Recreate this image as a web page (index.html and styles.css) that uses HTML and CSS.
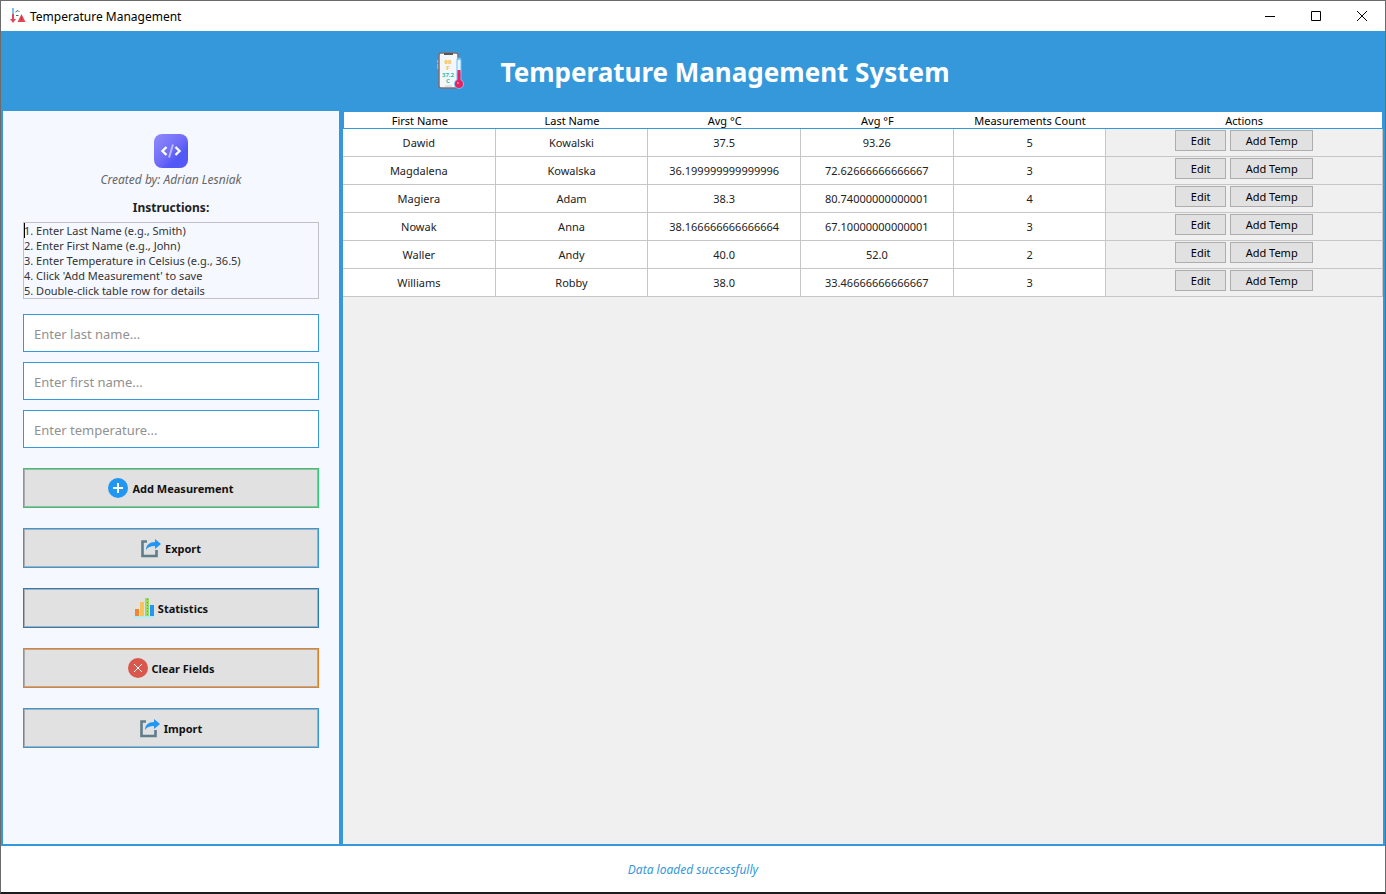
FILE: index.html
```html
<!DOCTYPE html>
<html lang="en">
<head>
<meta charset="utf-8">
<title>Temperature Management</title>
<link rel="stylesheet" href="styles.css">
</head>
<body>
<svg class="defs" aria-hidden="true">
  <symbol id="share" viewBox="0 0 20 20">
    <path d="M6 3.500H1.500V18h14v-6" fill="none" stroke="#607d8b" stroke-width="2.600"/>
    <path d="M14 1l6 5-6 5V8C9.500 8 7 9 5 12 5 7 8.500 4 14 4z" fill="#2196f3"/>
  </symbol>
</svg>
<div class="window">
  <div class="titlebar">
    <svg class="app-icon" viewBox="0 0 16 16" aria-hidden="true">
      <path d="M3 0v9" stroke="#7cc8ea" stroke-width="2"/>
      <path d="M3 6v6" stroke="#e04858" stroke-width="2"/>
      <path d="M0 11h6l-3 4z" fill="#e04858"/>
      <path d="M5.500 4L8 2.500 9.500 4M6 7.500h2.500" stroke="#45717c" fill="none"/>
      <path d="M11.500 6l4 8h-8z" fill="#e04858"/>
      <path d="M11.500 9v3" stroke="#a93646"/>
    </svg>
    <span class="caption">Temperature Management</span>
    <button class="win-btn" aria-label="Minimize"><svg viewBox="0 0 10 10"><path d="M0 5.500h10"/></svg></button>
    <button class="win-btn" aria-label="Maximize"><svg viewBox="0 0 10 10"><path d="M.5.500h9v9h-9z"/></svg></button>
    <button class="win-btn" aria-label="Close"><svg viewBox="0 0 10 10"><path d="M0 0l10 10M10 0L0 10"/></svg></button>
  </div>
  <header class="header">
    <svg class="logo" viewBox="0 0 28 38" aria-hidden="true">
      <path d="M0 8h2v3H0zM0 12h2v5H0z" fill="#b9a7a5"/>
      <rect x="2" y="1" width="19" height="35" rx="2" fill="#f3f7f9" stroke="#806f72" stroke-width="1.500"/>
      <path d="M7 1h9v2H7z" fill="#5b5558"/>
      <g class="logo-text">
        <text x="11" y="12" fill="#fbb545">99</text>
        <text x="11" y="18" fill="#fbb545">F</text>
        <text x="11" y="25" fill="#2cc0ae">37.2</text>
        <text x="11" y="31" fill="#2cc0ae">C</text>
      </g>
      <path d="M8 34h7" stroke="#c9cdd0"/>
      <path d="M22 8v23" stroke="#6cc0f3" stroke-width="5" stroke-linecap="round"/>
      <circle cx="22" cy="32" r="5" fill="#6cc0f3"/>
      <path d="M22 9v11" stroke="#e8f6fd" stroke-width="3" stroke-linecap="round"/>
      <path d="M22 18v13" stroke="#e92262" stroke-width="3"/>
      <circle cx="22" cy="32" r="4" fill="#e92262"/>
      <circle cx="21" cy="31" r="1" fill="#ff7fa8"/>
    </svg>
    <h1>Temperature Management System</h1>
  </header>
  <main class="main">
    <aside class="sidebar">
      <svg class="code-icon" viewBox="0 0 34 34" aria-hidden="true">
        <defs><linearGradient id="violet" x1="0" y1="0" x2="1" y2="1"><stop offset="0" stop-color="#918bfa"/><stop offset=".5" stop-color="#706cf8"/><stop offset=".7" stop-color="#5158f6"/><stop offset="1" stop-color="#5558f7"/></linearGradient></defs>
        <rect width="34" height="34" rx="8" fill="url(#violet)"/>
        <path d="M12.500 13L8.500 17l4 4M21.500 13l4 4-4 4" fill="none" stroke="#fff" stroke-width="2.400"/>
        <path d="M19 10.500l-4 13" stroke="#b9bafc" stroke-width="2"/>
      </svg>
      <p class="author">Created by: Adrian Lesniak</p>
      <label class="instructions-title" for="instructions">Instructions:</label>
      <div class="instructions">
        <textarea id="instructions" rows="5" readonly>1. Enter Last Name (e.g., Smith)
2. Enter First Name (e.g., John)
3. Enter Temperature in Celsius (e.g., 36.5)
4. Click 'Add Measurement' to save
5. Double-click table row for details</textarea>
        <span class="caret"></span>
      </div>
      <form class="fields">
        <input type="text" placeholder="Enter last name..." aria-label="Last name">
        <input type="text" placeholder="Enter first name..." aria-label="First name">
        <input type="text" placeholder="Enter temperature..." aria-label="Temperature">
      </form>
      <div class="commands">
        <button class="command green"><svg viewBox="0 0 20 20" aria-hidden="true"><circle cx="10" cy="10" r="10" fill="#2196f3"/><path d="M10 5v10M5 10h10" stroke="#fff" stroke-width="2"/></svg>Add Measurement</button>
        <button class="command blue"><svg viewBox="0 0 20 20" aria-hidden="true"><use href="#share"/></svg>Export</button>
        <button class="command navy"><svg viewBox="0 0 20 20" aria-hidden="true"><path d="M0 19h20" stroke="#b2ebf2" stroke-width="2"/><path d="M1 11h4v7H1z" fill="#f38335"/><path d="M6 4h4v14H6z" fill="#fbc25a"/><path d="M11 0h4v18h-4z" fill="#9ddb60"/><path d="M13.500 1v16" stroke="#5caa45" stroke-dasharray="1 2"/><path d="M16 7h4v11h-4z" fill="#2196f3"/></svg>Statistics</button>
        <button class="command orange"><svg viewBox="0 0 20 20" aria-hidden="true"><circle cx="10" cy="10" r="10" fill="#d9574c"/><path d="M6 6l8 8M14 6l-8 8" stroke="#fff"/></svg>Clear Fields</button>
        <button class="command blue"><svg viewBox="0 0 20 20" aria-hidden="true"><use href="#share"/></svg>Import</button>
      </div>
    </aside>
    <section class="records">
      <table>
        <colgroup><col class="data-col" span="5"><col></colgroup>
        <thead><tr><th>First Name</th><th>Last Name</th><th>Avg °C</th><th>Avg °F</th><th>Measurements Count</th><th>Actions</th></tr></thead>
        <tbody>
          <tr><td>Dawid</td><td>Kowalski</td><td>37.5</td><td>93.26</td><td>5</td><td class="actions"><div><button class="edit">Edit</button><button class="add">Add Temp</button></div></td></tr>
          <tr><td>Magdalena</td><td>Kowalska</td><td>36.199999999999996</td><td>72.62666666666667</td><td>3</td><td class="actions"><div><button class="edit">Edit</button><button class="add">Add Temp</button></div></td></tr>
          <tr><td>Magiera</td><td>Adam</td><td>38.3</td><td>80.74000000000001</td><td>4</td><td class="actions"><div><button class="edit">Edit</button><button class="add">Add Temp</button></div></td></tr>
          <tr><td>Nowak</td><td>Anna</td><td>38.166666666666664</td><td>67.10000000000001</td><td>3</td><td class="actions"><div><button class="edit">Edit</button><button class="add">Add Temp</button></div></td></tr>
          <tr><td>Waller</td><td>Andy</td><td>40.0</td><td>52.0</td><td>2</td><td class="actions"><div><button class="edit">Edit</button><button class="add">Add Temp</button></div></td></tr>
          <tr><td>Williams</td><td>Robby</td><td>38.0</td><td>33.46666666666667</td><td>3</td><td class="actions"><div><button class="edit">Edit</button><button class="add">Add Temp</button></div></td></tr>
        </tbody>
      </table>
    </section>
  </main>
  <footer class="status">Data loaded successfully</footer>
</div>
</body>
</html>
```
FILE: styles.css
```css
* { box-sizing: border-box; }
body { margin: 0; font-family: "Noto Sans", "Open Sans", sans-serif; font-size: 12px; color: #222; }
button, input, textarea { font-family: inherit; margin: 0; border-radius: 0; }
.defs { position: absolute; width: 0; height: 0; }
.window { display: flex; flex-direction: column; min-height: 100vh; border: 1px solid #6b6b6b; border-bottom: 2px solid #1b1b1e; background: #fff; }
.titlebar { display: flex; align-items: center; height: 30px; padding-left: 9px; color: #000; }
.app-icon { width: 16px; height: 16px; margin-right: 4px; }
.caption { flex: 1; font-size: 12px; }
.win-btn { display: flex; align-items: center; justify-content: center; width: 46px; height: 30px; padding: 0; border: 0; background: none; }
.win-btn svg { width: 10px; height: 10px; fill: none; stroke: #000; overflow: visible; }
.header { display: flex; align-items: center; justify-content: center; gap: 36px; height: 80px; background: #3498db; }
.logo { width: 28px; height: 38px; }
.logo-text { font-size: 6px; font-weight: 700; text-anchor: middle; }
.header h1 { margin: 0; padding-top: 2px; color: #fff; font-size: 26px; line-height: 40px; font-weight: 700; }
.main { display: flex; flex: 1; }
.sidebar { display: flex; flex-direction: column; width: 340px; padding: 23px 20px; border: 2px solid #3498db; border-top: 0; background: #f5f8ff; }
.code-icon { align-self: center; width: 34px; height: 34px; }
.author { margin: 3px 0 0; color: #666; font-size: 12px; line-height: 18px; font-style: italic; text-align: center; }
.instructions-title { margin-top: 10px; font-size: 12px; line-height: 18px; font-weight: 700; text-align: center; }
.instructions { position: relative; margin-top: 5px; }
.instructions textarea { display: block; width: 100%; padding: 0; border: 1px solid #c0c0c5; outline: 0; resize: none; overflow: hidden; background: transparent; color: #333; font-size: 11px; line-height: 15px; }
.caret { position: absolute; left: 1px; top: 1px; width: 1px; height: 15px; background: #000; }
.fields { display: flex; flex-direction: column; gap: 10px; margin-top: 15px; }
.fields input { width: 100%; height: 38px; padding: 2px 10px 0; border: 1px solid #3498db; background: #fff; font-size: 13px; }
.fields input::placeholder { color: #919191; opacity: 1; }
.commands { display: flex; flex-direction: column; gap: 20px; margin-top: 20px; }
.command { display: flex; align-items: center; justify-content: center; gap: 4px; height: 40px; padding: 0; border: 1px solid; box-shadow: inset 0 0 0 1px #adadad; background: #e1e1e1; color: #111; font-size: 11px; font-weight: 700; }
.command svg { width: 20px; height: 20px; }
.green { border-color: #2ecc71; }
.blue { border-color: #3498db; }
.navy { border-color: #2980b9; }
.orange { border-color: #e67e22; }
.records { flex: 1; padding-top: 1px; border: 2px solid #3498db; border-top: 0; background: linear-gradient(#3498db 1px, #f0f0f0 1px); }
table { width: 100%; table-layout: fixed; border-collapse: separate; border-spacing: 0; text-align: center; }
.data-col { width: 14.68%; }
th { height: 17px; padding: 1px 0 0; border-bottom: 1px solid #3498db; background: #fff; color: #000; font-size: 11px; line-height: 15px; font-weight: 400; }
th:first-child { border-left: 1px solid #3498db; }
th:last-child { border-right: 1px solid #3498db; }
td { height: 28px; padding: 0; border-right: 1px solid #c6c6c6; border-bottom: 1px solid #c6c6c6; background: #fff; font-size: 11px; line-height: 16px; }
td.actions { background: #f0f0f0; vertical-align: top; }
.actions div { display: flex; justify-content: center; gap: 4px; padding-top: 1px; }
.actions button { height: 21px; padding: 0; border: 1px solid #adadad; background: #e1e1e1; color: #000; font-size: 11px; }
.edit { width: 51px; }
.add { width: 83px; }
.status { display: flex; align-items: center; justify-content: center; height: 46px; color: #3498db; font-size: 12px; font-style: italic; }
```
